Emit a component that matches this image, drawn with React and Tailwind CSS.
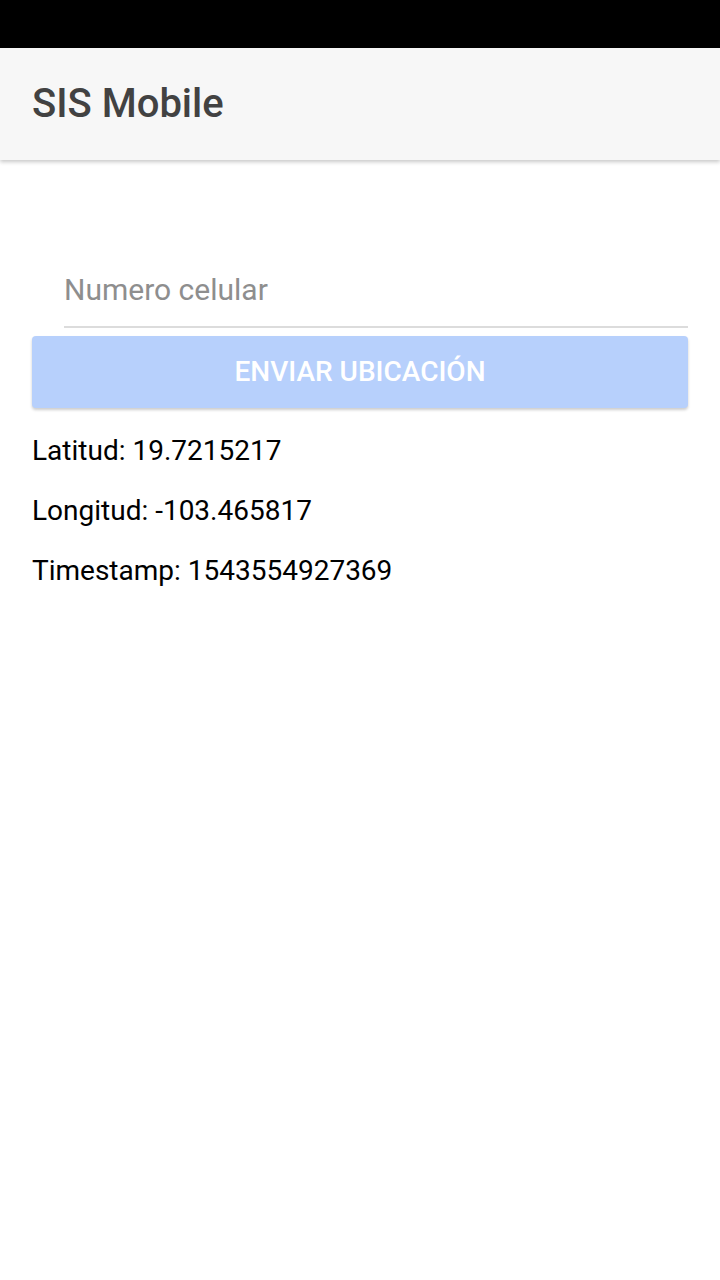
import React, { useState } from 'react';

export default function App() {
    const [phone, setPhone] = useState('');
    const location = { lat: '19.7215217', lng: '-103.465817', ts: '1543554927369' };

    return (
        <div className="min-h-[1280px] bg-white font-['Roboto',sans-serif]">
            {/* status bar */}
            <div className="h-12 bg-black"></div>

            {/* toolbar */}
            <div className="h-28 bg-[#f7f7f7] flex items-center px-8 shadow-[0_2px_4px_rgba(0,0,0,0.22)] relative">
                <h1 className="text-[40px] font-medium text-[#424242] leading-none">SIS Mobile</h1>
            </div>

            <div className="px-8 pt-[92px]">
                <div className="pl-8">
                    <input
                        value={phone}
                        onChange={e => setPhone(e.target.value)}
                        placeholder="Numero celular"
                        className="w-full h-[76px] text-[30px] text-[#212121] placeholder:text-[#8e8e8e] border-b-2 border-[#dcdcdc] outline-none bg-transparent"
                    />
                </div>
                <button
                    disabled
                    className="mt-[8px] w-full h-[72px] rounded bg-[#b7d0fc] text-white text-[28px] font-medium uppercase shadow-[0_2px_3px_rgba(0,0,0,0.2)]"
                >
                    Enviar ubicación
                </button>

                <div className="mt-[26px] flex flex-col gap-[26px] text-[28px] text-black leading-[34px]">
                    <p>Latitud: {location.lat}</p>
                    <p>Longitud: {location.lng}</p>
                    <p>Timestamp: {location.ts}</p>
                </div>
            </div>
        </div>
    );
}
